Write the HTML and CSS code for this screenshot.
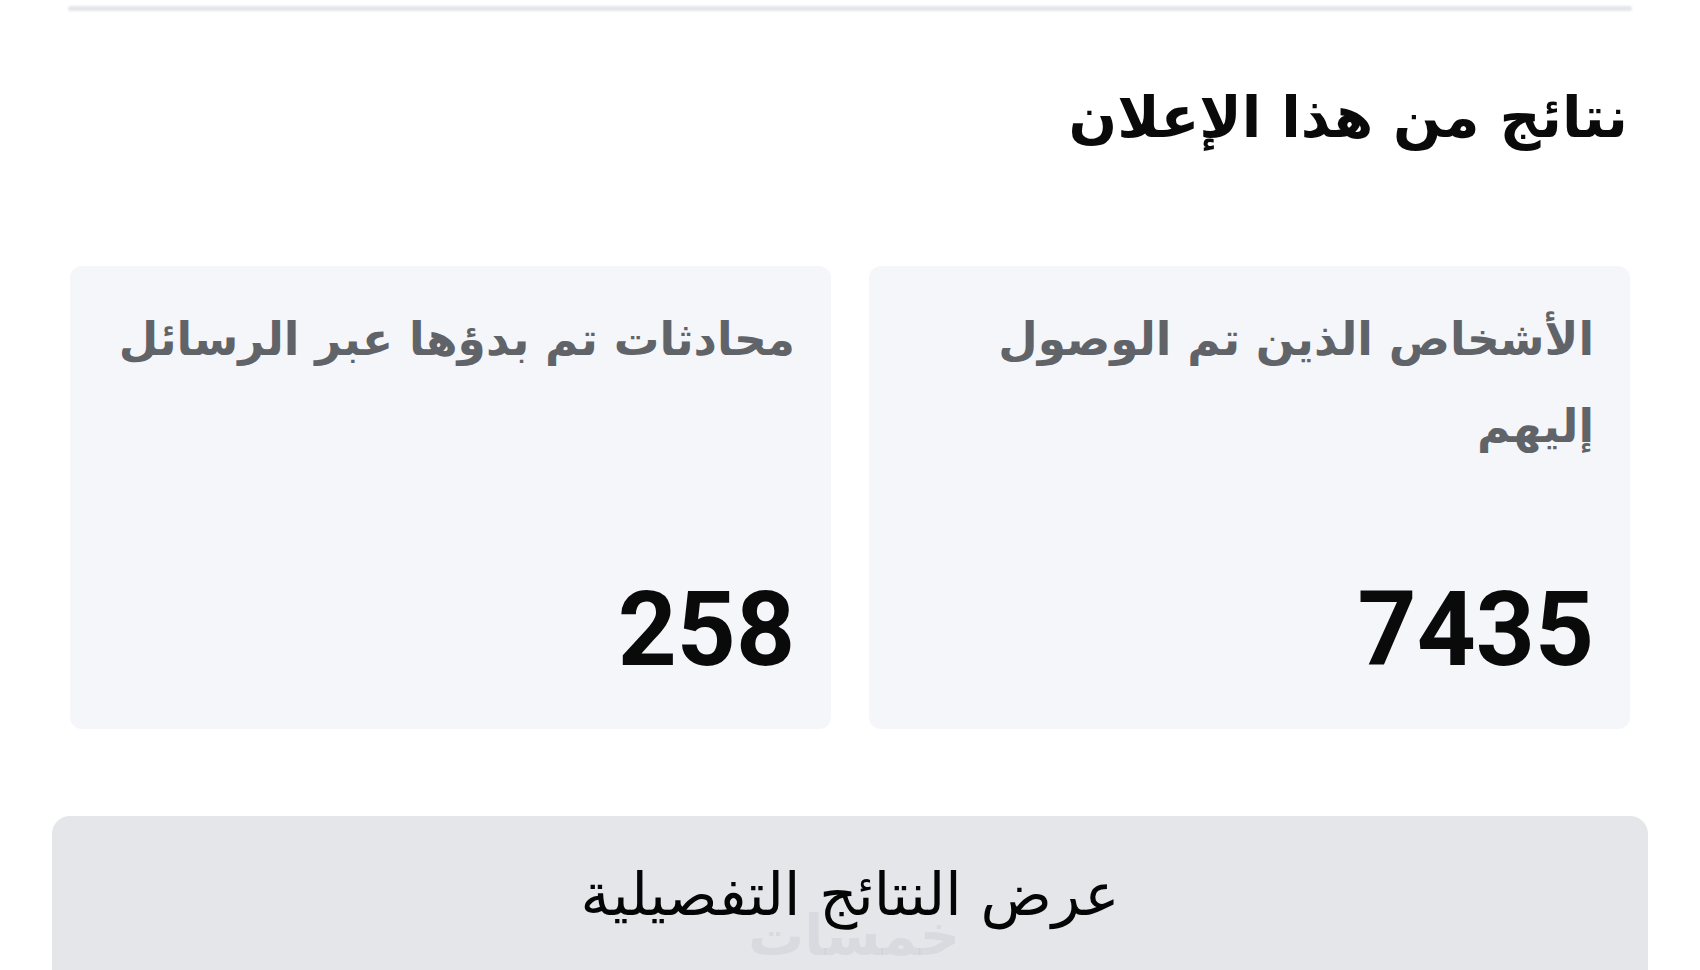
FILE: index.html
```html
<!DOCTYPE html>
<html lang="ar" dir="rtl">
<head>
<meta charset="utf-8">
<title>نتائج من هذا الإعلان</title>
<link rel="stylesheet" href="styles.css">
</head>
<body>
  <div class="divider"></div>

  <section class="results">
    <h2 class="results-title">نتائج من هذا الإعلان</h2>

    <div class="stats">
      <div class="stat-card">
        <div class="stat-label">الأشخاص الذين تم الوصول إليهم</div>
        <div class="stat-value">7435</div>
      </div>
      <div class="stat-card">
        <div class="stat-label">محادثات تم بدؤها عبر الرسائل</div>
        <div class="stat-value">258</div>
      </div>
    </div>

    <button class="details-btn" type="button">
      <span class="details-text">عرض النتائج التفصيلية</span>
      <span class="watermark">خمسات</span>
    </button>
  </section>
</body>
</html>
```

FILE: styles.css
```css
html, body {
  margin: 0;
  padding: 0;
  background: #ffffff;
}

body {
  direction: rtl;
  font-family: "DejaVu Sans", "Noto Sans", sans-serif;
  color: #050505;
  overflow: hidden;
}

.divider {
  height: 5px;
  margin: 6px 68px 0;
  background: #e4e5e8;
  border-radius: 3px;
  filter: blur(1px);
}

.results {
  display: flex;
  flex-direction: column;
}

.results-title {
  margin: 60px 72px 0 0;
  font-size: 57px;
  font-weight: 700;
  line-height: 92px;
  color: #0a0a0a;
}

.stats {
  display: grid;
  grid-template-columns: 1fr 1fr;
  gap: 38px;
  margin: 103px 70px 0;
}

.stat-card {
  display: flex;
  flex-direction: column;
  justify-content: space-between;
  height: 463px;
  box-sizing: border-box;
  padding: 30px 36px 48px 16px;
  background: #f5f6f9;
  border-radius: 12px;
}

.stat-label {
  font-size: 45.5px;
  font-weight: 700;
  line-height: 87px;
  color: #606368;
}

.stat-value {
  font-family: Roboto, "Liberation Sans", sans-serif;
  font-size: 103px;
  font-weight: 700;
  line-height: 1;
  color: #0a0a0a;
  direction: ltr;
  text-align: right;
}

.details-btn {
  position: relative;
  display: flex;
  align-items: flex-start;
  justify-content: center;
  height: 180px;
  margin: 87px 52px 0;
  padding: 34px 0 0;
  border: none;
  border-radius: 18px;
  background: #e4e6ea;
  font-family: inherit;
  cursor: pointer;
}

.details-text {
  position: relative;
  z-index: 1;
  font-size: 59px;
  font-weight: 400;
  line-height: 90px;
  color: #050505;
}

/* faint stamp sitting under the button caption */
.watermark {
  position: absolute;
  top: 92px;
  left: 696px;
  font-size: 56px;
  font-weight: 700;
  line-height: 56px;
  color: rgba(120, 120, 128, 0.1);
}
```
